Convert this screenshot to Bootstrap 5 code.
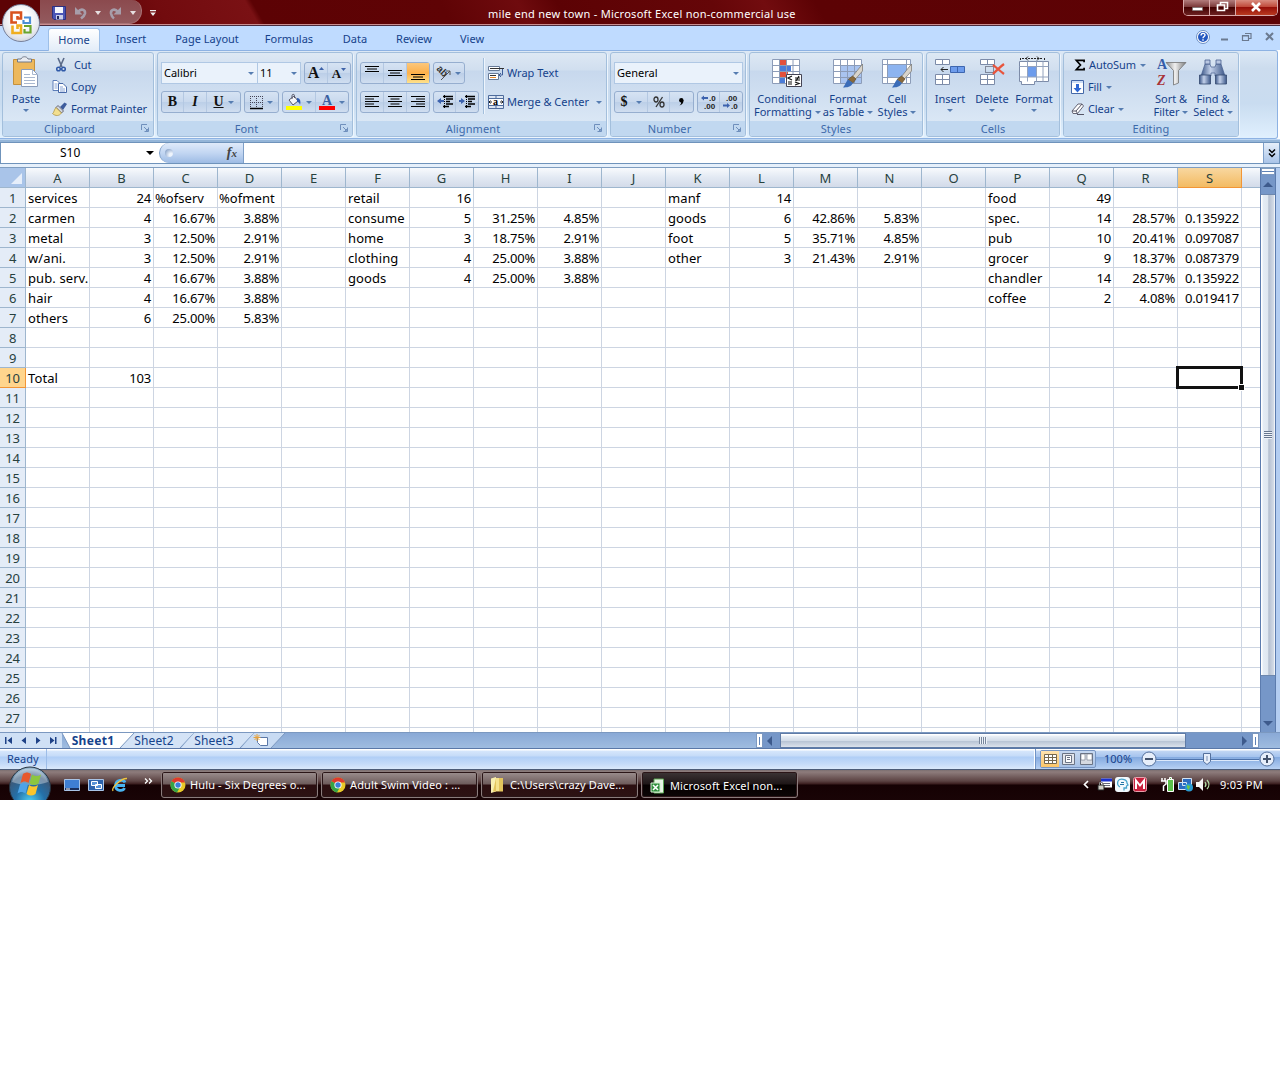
<!DOCTYPE html>
<html lang="en">
<head>
    <meta charset="UTF-8">
    <meta name="viewport" content="width=device-width, initial-scale=1.0">
    <title>mile end new town - Microsoft Excel non-commercial use</title>
    <link href="https://cdn.jsdelivr.net/npm/bootstrap@5.3.0/dist/css/bootstrap.min.css" rel="stylesheet">
    <style>
        body {
            background: #fff;
            font-family: "Noto Sans", "Open Sans", sans-serif;
            font-size: 11px;
            line-height: 14px;
            color: #15428b;
        }

        svg { display: block; flex: none; overflow: visible; }

        .desktop { width: 1280px; height: 800px; overflow: hidden; }

        /* Title bar */
        .titlebar {
            height: 26px;
            background: linear-gradient(60deg, #5d0305 0 8%, #720b0e 13%, #7a1114 20%, #5c0204 20.5%, #5f0305 35%, #6f0b0e 41%, #5c0204 44%, #650608 56%, #720c0f 60%, #5c0204 64%, #5e0305 100%);
            border-bottom: 1px solid #4a2a3c;
            box-shadow: inset 0 -1px #c98d90;
        }
        .quick { width: 102px; height: 24px; margin-left: 40px; padding: 3px 0 0 12px; background: linear-gradient(#8b4a4e, #935a5e); border: 1px solid #a97376; border-width: 0 1px 1px 0; border-radius: 0 10px 13px 0; }
        .quick-more { margin-top: 9px; margin-left: 8px; }
        .caption { color: #fff; width: 320px; top: 7px; left: 488px; letter-spacing: .28px; }
        .winbtns { width: 95px; height: 16px; margin-right: 2px; border: 1px solid #d9a9a9; border-top: 0; border-radius: 0 0 5px 5px; overflow: hidden; }
        .winbtns > div { width: 26px; background: linear-gradient(#b27c7c, #7c3a3a 45%, #400 50%, #6c2222); border-right: 1px solid #d9a9a9; }
        .winbtns > .closer { width: 42px; border: 0; background: linear-gradient(#d98c7f, #c04a3a 45%, #960f08 50%, #b93a20); }

        .orb { width: 38px; height: 38px; left: 2px; top: 4px; border-radius: 50%; background: radial-gradient(circle at 50% 40%, #fff 30%, #e4e6ec 65%, #b3bac8); border: 1px solid #77809a; z-index: 3; }

        /* Ribbon */
        .tabs { height: 24px; background: #bfdbff; padding-left: 48px; }
        .tabs > div { text-align: center; line-height: 25px; }
        .tabs .w-home { width: 52px; height: 23px; margin-top: 2px; line-height: 21px; background: linear-gradient(#fff, #e2ecf8); border: 1px solid #9dbfe8; border-bottom: 0; border-radius: 3px 3px 0 0; }
        .w62 { width: 62px; } .w90 { width: 90px; } .w74 { width: 74px; } .w58 { width: 58px; } .w60 { width: 60px; } .w56 { width: 56px; }

        .ribbon { height: 89px; padding: 1px 0 0 2px; gap: 3px; background: linear-gradient(#dce8f5, #ccdcee 20%, #c9dcf0 60%, #e0f0fe); border: 1px solid #8db2e3; border-left: 0; border-radius: 0 3px 3px 0; margin-right: 2px; }
        .group { height: 85px; border: 1px solid #a3bfdc; border-radius: 3px; background: linear-gradient(#dde8f4 0, #d1dfef 20%, #c7d8ed 22%, #dae7f5 82%); box-shadow: 1px 1px #edf5fd; }
        .group-body { height: 68px; }
        .group-name { height: 15px; background: #c1d8f0; color: #3e6aaa; text-align: center; line-height: 15px; border-radius: 0 0 2px 2px; letter-spacing: .1px; }
        .group-name svg { position: absolute; right: 4px; top: 3px; }
        .group-name.has-launch { padding-right: 17px; }
        .g-clip { width: 152px; } .g-font { width: 196px; } .g-align { width: 251px; } .g-num { width: 136px; } .g-style { width: 174px; } .g-cells { width: 134px; } .g-edit { width: 176px; }

        .bigbtn { width: 42px; padding-top: 3px; text-align: center; line-height: 13px; white-space: nowrap; }
        .bigbtn svg.pic { margin: 0 auto 4px; }
        .bigbtn .arr { margin: 4px auto 0; }
        .bigbtn .arr.d-inline-block { margin: 0; vertical-align: 2px; }
        .w-cond { width: 66px; } .w-tbl { width: 52px; margin: 0 1px 0 2px; } .w-cell { width: 44px; }
        .smalls { padding-top: 1px; letter-spacing: -.1px; }
        .smallbtn { height: 22px; white-space: nowrap; }
        .g-clip .smalls { margin-left: 3px; }
        .gap3 { gap: 3px; }
        .cells-row { padding-left: 2px; }
        .edit-row { padding: 0 4px 0 7px; }
        .arr { display: inline-block; width: 0; height: 0; border: 3px solid transparent; border-top: 3px solid #567db1; border-bottom: 0; vertical-align: middle; flex: none; }

        .tools { padding-top: 9px; padding-left: 3px; gap: 7px; }
        .tools > .d-flex { height: 22px; gap: 3px; }
        .set { border: 1px solid #96aecf; border-radius: 3px; background: linear-gradient(#d6e3f3, #c8d8ed 50%, #bccfe8 52%, #d0def0); }
        .set > div { width: 23px; height: 20px; border-right: 1px solid #b4c8e2; display: flex; align-items: center; justify-content: center; gap: 4px; }
        .set > div:last-child { border-right: 0; }
        .set .on { background: linear-gradient(#fbc77c, #fdb04a 50%, #fee28c); }
        .combo { height: 22px; background: #eaf2fb; border: 1px solid #b0c8e4; color: #000; padding: 0 3px 0 2px; }
        .ser { font-family: "Liberation Serif", serif; font-weight: bold; color: #111; font-size: 14px; }
        .set > .grow-a { font-size: 16px; gap: 0; }
        .set > .shrink-a { font-size: 13px; gap: 0; padding-top: 2px; }
        .pct { font-size: 14px; color: #222; font-weight: 500; }
        .w97 { width: 97px; } .w43 { width: 44px; margin-left: -4px; } .w128 { width: 129px; }
        .set > .w33 { width: 33px; } .set > .w30 { width: 30px; } .set > .w32 { width: 32px; } .set > .w22 { width: 22px; }
        .vline { width: 2px; height: 56px; margin: 5px 0 0 4px; border-left: 1px solid #a3bfdc; border-right: 1px solid #eef5fd; }

        /* Formula bar */
        .fbar-wrap { height: 29px; padding-top: 3px; background: linear-gradient(#bcd6f2 0 1px, #94b5d8 1px 3px, #e6f0fb 3px 28px, #7f9dc0 28px); }
        .fbar { height: 22px; border: 1px solid #6f93bb; background: #fff; color: #000; font-size: 12px; }
        .namebox { width: 158px; padding-left: 59px; padding-right: 5px; }
        .namebox .arr { border-width: 4px 4px 0; border-top-color: #000; }
        .fxpill { width: 85px; border: 1px solid #7f9fc8; border-width: 0 1px 0 1px; border-radius: 11px 0 0 11px; background: linear-gradient(#dfeafa, #c2d6f2 50%, #9dbbe4); padding: 0 6px; font-family: "Liberation Serif", serif; font-style: italic; font-weight: bold; font-size: 14px; color: #444; }
        .fxpill i { width: 8px; height: 8px; border-radius: 50%; background: radial-gradient(circle at 75% 75%, #eef4fc 20%, #8fa8cc 80%); margin-left: -1px; }
        .fxpill span span { font-size: 11px; }
        .expand { width: 16px; background: linear-gradient(#e6effa, #a9c4e8); border-left: 1px solid #7f9fc8; }

        /* Worksheet */
        .sheet-area { height: 564px; background: #b3cdf1; }
        .gridbox { width: 1260px; height: 564px; overflow: hidden; background: #fff; }
        .grid { width: 1306px; table-layout: fixed; border-collapse: separate; border-spacing: 0; font-size: 13px; color: #000; }
        .grid td, .grid th { height: 20px; padding: 1px 2px 0; line-height: 18px; border: solid #cdd5e2; border-width: 0 1px 1px 0; white-space: nowrap; font-weight: 400; position: relative; }
        .grid td { letter-spacing: .1px; }
        .grid td.num { text-align: right; letter-spacing: -.2px; }
        .grid td.pct-label { padding-left: 1px; letter-spacing: .05px; }
        .grid th { text-align: center; color: #27413e; padding: 1px 0 0; border-color: #9eb6ce; }
        .grid thead th { background: linear-gradient(#f8fafd, #e2e9f3 50%, #d3dbe9); }
        .grid tbody th { background: #e4ecf7; letter-spacing: -.2px; }
        .grid thead th.hot { background: linear-gradient(#f8d7a0, #f3bb62); border-color: #f29536; }
        .grid tbody th.hot { background: #ffd58d; border-color: #f29536; }
        .grid thead th.corner { background: #a9c4e9; padding: 0; }
        .corner svg { position: absolute; right: 3px; bottom: 3px; }
        .cursor { position: absolute; left: -2px; top: -2px; width: 67px; height: 23px; border: 3px solid #111; z-index: 2; }
        .cursor::after { content: ""; position: absolute; right: -4px; bottom: -4px; width: 5px; height: 5px; background: #111; outline: 1px solid #fff; }

        .vscroll { width: 16px; background: #7697c8; border-left: 1px solid #5c7cae; border-right: 1px solid #5c7cae; }
        .vsplit { height: 7px; background: linear-gradient(#7f9dc0 0 1px, #fff 1px 3px, #5f82b6 3px 4px, #fff 4px); border: 1px solid #7c98c0; border-top: 0; }
        .vup { height: 19px; }
        .vthumb { height: 482px; border: 1px solid #6d87ad; border-width: 1px 0; background: linear-gradient(90deg, #fff 0 1px, #e4ecf5 2px, #dfe7f0 50%, #b4bfd0 55%, #d3dbe6 90%, #fff); }
        .vthumb i { width: 8px; height: 8px; background: repeating-linear-gradient(#66768e 0 1px, #eef2f8 1px 2px); }
        .up, .down, .lf, .rt { width: 0; height: 0; border: 5px solid transparent; }
        .up { border-top: 0; border-bottom: 5px solid #3d5a8c; }
        .down { border-bottom: 0; border-top: 5px solid #3d5a8c; margin-bottom: 6px; }
        .lf { border-left: 0; border-right: 5px solid #3d5a8c; }
        .rt { border-right: 0; border-left: 5px solid #3d5a8c; }

        /* Sheet tabs */
        .bottom { height: 17px; border-top: 1px solid #7b98c0; border-bottom: 1px solid #5a78a8; background: linear-gradient(#89a9d6, #9fbce0); font-size: 12px; }
        .navs { width: 62px; background: #cfe0f5; padding: 0 5px; }
        .stab { height: 15px; line-height: 15px; text-align: center; position: relative; z-index: 1; letter-spacing: .15px; }
        .stab svg.edge { position: absolute; left: 0; top: 0; z-index: -1; }
        .s-one { width: 62px; font-weight: bold; letter-spacing: .3px; z-index: 3; }
        .s-two { width: 60px; }
        .hgrip { width: 7px; background: #fff; border: 1px solid #7c98c0; }
        .hgrip::after { content: ""; display: block; width: 1px; height: 8px; margin: 3px 0 0 2px; background: #5f82b6; }
        .hgrip.last { margin-right: 21px; }
        .hthumb { width: 406px; border: 1px solid #5f7ba6; background: linear-gradient(#fff 0 1px, #e9eff6 2px, #d3dce8 50%, #b7c3d4 55%, #dbe2ec); }
        .hthumb i { width: 8px; height: 7px; background: repeating-linear-gradient(90deg, #77869c 0 1px, #eef2f8 1px 2px); }
        .htrack { background: #7697c8; width: 17px; padding-left: 4px; }
        .htrack.far { width: 66px; padding-right: 5px; }

        /* Status bar */
        .status { height: 21px; background: linear-gradient(#fff 0 1px, #d6e6fb 2px, #c5dbf8 35%, #b0cef6 40%, #c5dbf8 75%, #dbe9fb); border-bottom: 1px solid #4c5c78; }
        .ready { width: 47px; padding-left: 7px; border-right: 1px solid #9dbde8; }
        .status .zone { width: 245px; background: linear-gradient(#fff 0 1px, #c1d6f3 2px, #a6c4ee 38%, #85abe0 42%, #a9c6ee 85%, #b9d2f3); border-left: 1px solid #6f93c6; box-shadow: -1px 0 #fff; }
        .views { height: 18px; border: 1px solid #7795c2; border-radius: 2px; margin-left: 4px; background: linear-gradient(#c6d8f0, #a8c2e6); }
        .views > div { width: 18px; display: flex; align-items: center; justify-content: center; }
        .views .on { background: linear-gradient(#ffe3b0, #fdc669); }
        .zoombar { margin-right: 5px; }

        /* Taskbar */
        .taskbar { height: 30px; background: linear-gradient(#7c6f70 0, #8d7c7c 2px, #5c4343 11px, #3a1d1e 14px, #150103 15px, #190406 100%); color: #fff; }
        .start { position: absolute; left: 8px; top: -4px; }
        .task { width: 157px; height: 27px; margin-top: 1px; border: 1px solid #8b7c7c; border-radius: 3px; padding-left: 8px; gap: 4px; background: linear-gradient(#9c8f8f, #6e5c5c 48%, #2b0e10 52%, #2c1213); box-shadow: inset 0 0 0 1px #2a1517; white-space: nowrap; margin-right: 3px; letter-spacing: .13px; }
        .task.active { background: linear-gradient(#3d3536, #1e1617 48%, #050000 52%, #0c0606); padding-top: 2px; }
        .tray { gap: 3px; padding-right: 17px; padding-bottom: 2px; }
        .tray .first { margin-right: 6px; }
        .tray .third { margin-right: 11px; }
        .tray .clock { margin-left: 6px; letter-spacing: .25px; padding-top: 2px; }
    </style>
</head>
<body>
<!-- Shared icons -->
<svg width="0" height="0" class="position-absolute">
    <defs>
        <symbol id="launch" viewBox="0 0 8 8"><path d="M.5 6V.5H6" fill="none" stroke="#6f8fbc"/><path d="M3 3l3 3M7.500 3.500V7.500H3.500M5 7h2V5z" fill="none" stroke="#6f8fbc"/></symbol>
        <symbol id="chrome" viewBox="0 0 16 16"><circle cx="8" cy="8" r="7.500" fill="#e8c928"/><path d="M8 8L1.500 4.200A7.500 7.500 0 0 1 15 5.500H8z" fill="#dd3a2c"/><path d="M8 8L1.500 4.200A7.500 7.500 0 0 0 7 15.400L10 10z" fill="#35a346"/><circle cx="8" cy="8" r="3.600" fill="#fff"/><circle cx="8" cy="8" r="2.700" fill="#3c7fd6"/></symbol>
        <symbol id="brush" viewBox="0 0 20 24"><path d="M19.500 0v7l-7 8-3-2.500z" fill="#d8d4cc" stroke="#77736b" stroke-width=".7"/><path d="M9.500 12l3.500 3-3 4-5-3.500z" fill="#8a6a3c" stroke="#54442a" stroke-width=".6"/><path d="M5 15.500l5 3.500c-2 4-6 4.500-10 4.500 2-2 2.500-5 5-8z" fill="#3b6cb8"/></symbol>
        <linearGradient id="steel"><stop offset="0" stop-color="#3c5788"/><stop offset=".4" stop-color="#c3d1ea"/><stop offset="1" stop-color="#3c5788"/></linearGradient>
        <linearGradient id="funnel"><stop offset="0" stop-color="#8d8d8d"/><stop offset=".45" stop-color="#f0f0f0"/><stop offset="1" stop-color="#7c7c7c"/></linearGradient>
    </defs>
</svg>

<div class="desktop position-relative">
    <!-- Title bar -->
    <div class="titlebar d-flex justify-content-between position-relative">
        <div class="d-flex">
            <div class="quick d-flex align-items-center">
                <svg width="14" height="14" viewBox="0 0 14 14"><path d="M.5.5h13v13H2L.5 12z" fill="#4b55b5" stroke="#2d3180"/><path d="M3 1h8v6H3z" fill="#f4f6fc"/><path d="M4 9h7v4.500H4z" fill="#c9cee8"/><path d="M5 10h2v3H5z" fill="#23275e"/></svg>
                <svg class="ms-2" width="13" height="13" viewBox="0 0 13 13"><path d="M4 5C7 1 11.500 2.500 11 6.500c-.4 2-2 3.500-4 5" fill="none" stroke="#a79daa" stroke-width="2.600"/><path d="M1 0v7.500h7.500z" fill="#a79daa"/></svg>
                <svg class="ms-2" width="6" height="4" viewBox="0 0 6 4"><path d="M0 0h6L3 4z" fill="#e6dfe0"/></svg>
                <svg class="ms-2" width="13" height="13" viewBox="0 0 13 13"><path d="M9 5C6 1 1.500 2.500 2 6.500c.4 2 1 3.500 3 5" fill="none" stroke="#a79daa" stroke-width="2.600"/><path d="M12 0v7.500H4.500z" fill="#a79daa"/></svg>
                <svg class="ms-2" width="6" height="4" viewBox="0 0 6 4"><path d="M0 0h6L3 4z" fill="#e6dfe0"/></svg>
            </div>
            <svg class="quick-more" width="6" height="8" viewBox="0 0 6 8"><path d="M0 1h6v1.200H0zM.2 3.500h5.600L3 7z" fill="#eee"/></svg>
        </div>
        <div class="caption position-absolute text-nowrap">mile end new town - Microsoft Excel non-commercial use</div>
        <div class="winbtns d-flex">
            <div><svg width="26" height="15"><path d="M8.500 7.500h10v3h-10z" fill="#fff" stroke="#777" stroke-width=".6"/></svg></div>
            <div><svg width="26" height="15"><path d="M10.500 5V2.500h7v6H15M7.500 5h7v5.500h-7z" fill="none" stroke="#fff" stroke-width="1.600"/></svg></div>
            <div class="closer"><svg width="42" height="15"><path d="M16 3l8 8M24 3l-8 8" stroke="#fff" stroke-width="2.600"/></svg></div>
        </div>
    </div>

    <div class="orb position-absolute">
        <svg width="36" height="36" viewBox="0 0 36 36" fill="none" stroke-width="2.600">
            <path d="M14 17.500H8.500V7.500H18V13.500H14.500V11" stroke="#d9531e"/>
            <path d="M21 12.500H27V18H20.500V15" stroke="#4c8ed6" stroke-width="2.200"/>
            <path d="M14.500 24V20.500H18V28H9.500V20.500" stroke="#f0ae1f"/>
            <path d="M21 21H27.500V27.500H21.500V24" stroke="#6aa52e" stroke-width="2.200"/>
        </svg>
    </div>

    <!-- Ribbon tabs -->
    <div class="tabs d-flex justify-content-between">
        <div class="d-flex">
            <div class="w-home">Home</div>
            <div class="w62">Insert</div>
            <div class="w90">Page Layout</div>
            <div class="w74">Formulas</div>
            <div class="w58">Data</div>
            <div class="w60">Review</div>
            <div class="w56">View</div>
        </div>
        <svg width="84" height="24" viewBox="0 0 84 24">
            <circle cx="7" cy="11" r="6.500" fill="#fff" stroke="#6c8fc4"/><circle cx="7" cy="11" r="5" fill="#2458c0"/><path d="M5 9.500c0-2.800 4-2.800 4-.4C9 10.600 7 10.500 7 12.300M7 13.300v1.400" fill="none" stroke="#fff" stroke-width="1.400"/>
            <g fill="none" stroke="#6b7a90"><path d="M25 13.500h7" stroke-width="2"/><path d="M46.500 9.500h6v5h-6zM46 10h7M49 7.500h6v5h-2M49 7.500h6" stroke-width="1.200"/><path d="M70 7l7 7M77 7l-7 7" stroke-width="2"/></g>
        </svg>
    </div>

    <!-- Ribbon -->
    <div class="ribbon d-flex">
        <div class="group g-clip">
            <div class="group-body d-flex">
                <div class="bigbtn gap3 ps-1">
                    <svg class="pic" width="28" height="32" viewBox="0 0 28 32"><path d="M1.500 3.500h21v25h-21z" fill="#edb85c" stroke="#c4903c"/><path d="M5.500 6V3h3.500c1-3 6-3 7 0h3.500v3z" fill="#e8ebf0" stroke="#707888"/><path d="M9.500 13.500h11l5 5v12h-16z" fill="#fff" stroke="#8a9cba"/><path d="M20.500 13.500v5h5M12 18.500h6M12 21.500h11M12 24.500h11M12 27.500h11" stroke="#a9b8d0" fill="none"/></svg>
                    Paste<br><span class="arr d-block"></span>
                </div>
                <div class="smalls">
                    <div class="smallbtn d-flex align-items-center ps-2">
                        <svg width="10" height="14" viewBox="0 0 10 14"><path d="M2 0l4 9M8 0L4 9" stroke="#5a6a88" stroke-width="1.600"/><circle cx="2.500" cy="11" r="1.800" fill="none" stroke="#2f59a8" stroke-width="1.500"/><circle cx="7.500" cy="11" r="1.800" fill="none" stroke="#2f59a8" stroke-width="1.500"/></svg>
                        <span class="ms-1 ps-1">Cut</span>
                    </div>
                    <div class="smallbtn d-flex align-items-center gap-1 ps-1">
                        <svg width="15" height="14" viewBox="0 0 15 14"><path d="M1 .5h4l3 3v7H1z" fill="#fff" stroke="#5c7db8"/><path d="M6.500 3.500h4.500l3.500 3.500v5.500h-8z" fill="#fff" stroke="#4668a8"/><path d="M2.500 4h3M2.500 6h3M2.500 8h3M8 7h3M8 9h5M8 11h5" stroke="#7c9ad0" stroke-width=".9"/></svg>Copy
                    </div>
                    <div class="smallbtn d-flex align-items-center gap-1 ps-1">
                        <svg width="15" height="14" viewBox="0 0 15 14"><path d="M8 5l4.500-4.500L15 2l-4 6z" fill="#3d5c9c"/><path d="M6 3.500l5.500 5.500-2 2L4 5.500z" fill="#d0d6e0" stroke="#667"/><path d="M4 5.500L9.500 11c-2 3-6 3.500-9 .5C2 11 2 7.500 4 5.500z" fill="#f2df90" stroke="#a98c38" stroke-width=".7"/></svg>Format Painter
                    </div>
                </div>
            </div>
            <div class="group-name has-launch position-relative">Clipboard<svg width="8" height="8"><use href="#launch"/></svg></div>
        </div>

        <div class="group g-font">
            <div class="group-body tools d-flex flex-column">
                <div class="d-flex">
                    <div class="combo w97 d-flex align-items-center justify-content-between">Calibri <span class="arr"></span></div>
                    <div class="combo w43 d-flex align-items-center justify-content-between">11 <span class="arr"></span></div>
                    <div class="set d-flex">
                        <div class="ser grow-a">A<svg width="5" height="14"><path d="M0 4h5L2.500 1z" fill="#3d62a8"/></svg></div>
                        <div class="ser shrink-a w22">A<svg width="5" height="14"><path d="M0 1h5L2.500 4z" fill="#3d62a8"/></svg></div>
                    </div>
                </div>
                <div class="d-flex">
                    <div class="set d-flex">
                        <div class="ser w22">B</div>
                        <div class="ser fst-italic">I</div>
                        <div class="ser w33"><u>U</u><span class="arr"></span></div>
                    </div>
                    <div class="set d-flex">
                        <div class="w33"><svg width="13" height="13" viewBox="0 0 13 13"><path d="M.5 0v12M6.500 0v12M12.500 0v12M0 .5h13M0 6.500h13" stroke="#445" stroke-dasharray="1 1" fill="none"/><path d="M0 12.500h13" stroke="#000" stroke-width="1.500"/></svg><span class="arr"></span></div>
                    </div>
                    <div class="set d-flex">
                        <div class="w33"><svg width="16" height="16" viewBox="0 0 16 16"><path d="M3 6l5-4 4 5-5 4z" fill="#f4f6fa" stroke="#556"/><path d="M6 5V1.500c0-1.500 2.500-1.500 2.500 0V4" fill="none" stroke="#556"/><path d="M11 4c3 0 4 3 3 7-.5-2-1-3-3-3z" fill="#2b59b0"/><path d="M0 12h16v4H0z" fill="#ff0"/></svg><span class="arr"></span></div>
                        <div class="w32"><svg width="16" height="16" viewBox="0 0 16 16"><text x="3" y="11" font-family="Liberation Serif, serif" font-weight="bold" font-size="14" fill="#3a5fa0">A</text><path d="M0 12h16v4H0z" fill="#f00"/></svg><span class="arr"></span></div>
                    </div>
                </div>
            </div>
            <div class="group-name has-launch position-relative">Font<svg width="8" height="8"><use href="#launch"/></svg></div>
        </div>

        <div class="group g-align">
            <div class="group-body d-flex">
                <div class="tools d-flex flex-column">
                    <div class="d-flex">
                        <div class="set d-flex">
                            <div><svg width="14" height="14"><path d="M0 .5h14M2 3h10M0 5.500h14" stroke="#000"/></svg></div>
                            <div><svg width="14" height="14"><path d="M0 4.500h14M2 7h10M0 9.500h14" stroke="#000"/></svg></div>
                            <div class="on w22"><svg width="14" height="14"><path d="M0 8.500h14M2 11h10M0 13.500h14" stroke="#000"/></svg></div>
                        </div>
                        <div class="set d-flex"><div class="w30"><svg width="14" height="14" viewBox="0 0 14 14"><text x="-1" y="5" transform="rotate(45 1 4)" font-size="10" font-weight="bold" font-family="Liberation Sans, sans-serif" fill="#333">ab</text><path d="M4 14l9-9M13 9V5H9" fill="none" stroke="#555"/></svg><span class="arr"></span></div></div>
                    </div>
                    <div class="d-flex">
                        <div class="set d-flex">
                            <div><svg width="14" height="12"><path d="M0 .5h14M0 3h9M0 5.500h14M0 8h9M0 10.500h14" stroke="#000" stroke-width="1.200"/></svg></div>
                            <div><svg width="14" height="12"><path d="M0 .5h14M2.500 3h9M0 5.500h14M2.500 8h9M0 10.500h14" stroke="#000" stroke-width="1.200"/></svg></div>
                            <div class="w22"><svg width="14" height="12"><path d="M0 .5h14M5 3h9M0 5.500h14M5 8h9M0 10.500h14" stroke="#000" stroke-width="1.200"/></svg></div>
                        </div>
                        <div class="set d-flex">
                            <div class="w22"><svg width="16" height="14"><path d="M6 1.500h10M9 4h7M9 6.500h4M9 9h7M6 11.500h6" stroke="#000" stroke-width="1.400"/><path d="M7.500 0v14" stroke="#000" stroke-dasharray="1 1"/><path d="M0 6l4-3v2h3v2H4v2z" fill="#3c62ae"/></svg></div>
                            <div class="w22"><svg width="16" height="14"><path d="M6 1.500h10M9 4h7M9 6.500h4M9 9h7M6 11.500h6" stroke="#000" stroke-width="1.400"/><path d="M7.500 0v14" stroke="#000" stroke-dasharray="1 1"/><path d="M6 6L2 3v2H0v2h2v2z" fill="#3c62ae"/></svg></div>
                        </div>
                    </div>
                </div>
                <div class="vline"></div>
                <div class="tools d-flex flex-column text-nowrap">
                    <div class="d-flex align-items-center">
                        <svg width="16" height="16" viewBox="0 0 16 16"><path d="M.5 1.500h11v4H.5zM.5 8.500h10v6H.5z" fill="#fff" stroke="#667a98"/><path d="M2 3.500h14M2 10.500h6" stroke="#333"/><path d="M2 12.500h6" stroke="#e88a2c"/><path d="M14.500 4v6h-3M13 8l-2 2 2 2" fill="none" stroke="#3c5c98"/></svg>Wrap Text
                    </div>
                    <div class="d-flex align-items-center">
                        <svg width="16" height="16" viewBox="0 0 16 16"><path d="M.5 1.500h15v13H.5zM.5 4.500h15M.5 11.500h15M8 1.500v3M8 11.500v3" fill="#dce6f4" stroke="#4f6c9c"/><path d="M1 5h14v6H1z" fill="#fff"/><text x="5" y="11" font-size="10" font-weight="bold" font-family="Liberation Serif, serif">a</text><path d="M1 8h3M12 8h3M2.500 6.500L1 8l1.500 1.500M13.500 6.500L15 8l-1.500 1.500" stroke="#222" fill="none"/></svg>Merge &amp; Center <span class="arr ms-1"></span>
                    </div>
                </div>
            </div>
            <div class="group-name has-launch position-relative">Alignment<svg width="8" height="8"><use href="#launch"/></svg></div>
        </div>

        <div class="group g-num">
            <div class="group-body tools d-flex flex-column">
                <div class="d-flex"><div class="combo w128 d-flex align-items-center justify-content-between">General <span class="arr"></span></div></div>
                <div class="d-flex">
                    <div class="set d-flex">
                        <div class="ser w33"><span class="me-1">$</span><span class="arr"></span></div>
                        <div class="w22"><svg width="12" height="12" viewBox="0 0 12 12" fill="none" stroke="#333" stroke-width="1.300"><path d="M9.500 1l-6.500 10"/><ellipse cx="3" cy="3.500" rx="2" ry="2.500"/><ellipse cx="9" cy="8.500" rx="2" ry="2.500"/></svg></div>
                        <div class="ser"><svg width="5" height="8"><circle cx="2.300" cy="2.300" r="2.200"/><path d="M4.500 2.500C4.500 5 3 7 .5 7.500 2 6 2.500 5 2 4z"/></svg></div>
                    </div>
                    <div class="set d-flex">
                        <div class="w22"><svg width="16" height="14" font-size="8" font-weight="bold" font-family="Liberation Sans, sans-serif" fill="#222"><text x="8" y="6">.0</text><text x="3" y="14">.00</text><path d="M0 3l3-2.500V2h4v2H3v1.500z" fill="#3c62ae"/></svg></div>
                        <div class="w22"><svg width="16" height="14" font-size="8" font-weight="bold" font-family="Liberation Sans, sans-serif" fill="#222"><text x="3" y="6">.00</text><text x="8" y="14">.0</text><path d="M7 10.500L4 8v1.500H0v2h4V13z" fill="#3c62ae"/></svg></div>
                    </div>
                </div>
            </div>
            <div class="group-name has-launch position-relative">Number<svg width="8" height="8"><use href="#launch"/></svg></div>
        </div>

        <div class="group g-style">
            <div class="group-body d-flex ps-1">
                <div class="bigbtn w-cond">
                    <svg class="pic" width="32" height="32" viewBox="0 0 32 32"><path d="M1.500 3.500h27v24h-27z" fill="#fff"/><path d="M8 3h7v6H8zM8 15h9v6H8z" fill="#e2503c"/><path d="M8 9h12v6H8zM8 21h6v6H8z" fill="#4a7cd8"/><path d="M1.500 3.500h27v24h-27zM1.500 9.500h27M1.500 15.500h27M1.500 21.500h27M8.500 3.500v24M15.500 3.500v24M22 3.500v24" fill="none" stroke="#8c9cb8"/><path d="M15.500 18.500h15v12h-15z" fill="#fff" stroke="#445"/><path d="M21 20l-4 2 4 2M17 26h4M17 28h4M24 22h5M24 24h5M28 20l-3 5M24 26l4 1.500-4 1.500" fill="none" stroke="#111" stroke-width="1.200"/></svg>
                    Conditional<br>Formatting <span class="arr d-inline-block"></span>
                </div>
                <div class="bigbtn w-tbl">
                    <svg class="pic" width="32" height="32" viewBox="0 0 32 32"><path d="M1.500 3.500h28v24h-28z" fill="#fff"/><path d="M8 9h21v18H8z" fill="#a9c4f0"/><path d="M1.500 3.500h28v24h-28zM1.500 9.500h28M1.500 15.500h28M1.500 21.500h28M8.500 3.500v24M15.500 3.500v24M22.500 3.500v24" fill="none" stroke="#8c9cb8"/><use href="#brush" x="11" y="8" width="20" height="24"/></svg>
                    Format<br>as Table <span class="arr d-inline-block"></span>
                </div>
                <div class="bigbtn w-cell">
                    <svg class="pic" width="32" height="32" viewBox="0 0 32 32"><path d="M1.500 3.500h28v24h-28z" fill="#fff"/><path d="M7 8h18v13H7z" fill="#8db4f0"/><path d="M1.500 3.500h28v24h-28zM1.500 8.500h28M1.500 21.500h28M6.500 3.500v24M25.500 3.500v24" fill="none" stroke="#8c9cb8"/><use href="#brush" x="11" y="8" width="20" height="24"/></svg>
                    Cell<br>Styles <span class="arr d-inline-block"></span>
                </div>
            </div>
            <div class="group-name">Styles</div>
        </div>

        <div class="group g-cells">
            <div class="group-body cells-row d-flex">
                <div class="bigbtn">
                    <svg class="pic" width="32" height="32" viewBox="0 0 32 32"><path d="M1.500 3.500h14v5h-14zM8.500 3.500v5M1.500 18.500h14v10h-14zM8.500 18.500v10M1.500 23.500h14" fill="#fff" stroke="#7c8ba8"/><path d="M16.500 10.500h14v6h-14zM23.500 10.500v6" fill="#6d9cec" stroke="#3d66b0"/><path d="M7 13.500h7M9.500 11L7 13.500 9.500 16" fill="none" stroke="#222"/></svg>
                    Insert<span class="arr d-block"></span>
                </div>
                <div class="bigbtn">
                    <svg class="pic" width="32" height="32" viewBox="0 0 32 32"><path d="M4.500 3.500h14v5h-14zM11.500 3.500v5M4.500 18.500h14v10h-14zM11.500 18.500v10M4.500 23.500h14" fill="#fff" stroke="#7c8ba8"/><path d="M9.500 10.500h8v6h-8z" fill="none" stroke="#334" stroke-dasharray="1 1"/><path d="M17 9c4 3 7 6 11 9M28 8c-4 3-7 6-11 10" fill="none" stroke="#e8543c" stroke-width="2.200"/></svg>
                    Delete<span class="arr d-block"></span>
                </div>
                <div class="bigbtn">
                    <svg class="pic" width="32" height="32" viewBox="0 0 32 32"><path d="M1.500 5.500h29v20h-14v3h-13v-3h-2z" fill="#fff" stroke="#7c8ba8"/><path d="M10 11h8v10h-8z" fill="#6d9cec"/><path d="M1.500 10.500h29M1.500 21h29M9.500 5.500v20M18.500 5.500v20M25 5.500v20" stroke="#94a3be" fill="none"/><path d="M2.500 4V1M26.500 4V1M4 2.500h21" stroke="#222" stroke-dasharray="2 1"/><path d="M10 .5L8 2.500l2 2M19 .5l2 2-2 2" fill="none" stroke="#222"/></svg>
                    Format<span class="arr d-block"></span>
                </div>
            </div>
            <div class="group-name">Cells</div>
        </div>

        <div class="group g-edit">
            <div class="group-body edit-row d-flex justify-content-between">
                <div class="smalls">
                    <div class="smallbtn d-flex align-items-center"><svg class="ms-1 me-1" width="10" height="12" viewBox="0 0 11 12"><path d="M10 3V1H1.500L6 6l-4.500 5H10V9" fill="none" stroke="#000" stroke-width="1.900"/></svg>AutoSum <span class="arr ms-1"></span></div>
                    <div class="smallbtn d-flex align-items-center"><svg class="me-1" width="13" height="14" viewBox="0 0 13 14"><path d="M.5.5h12v13H.5z" fill="#fff" stroke="#4468a8"/><path d="M1 1h11v2H1z" fill="#cdddf5"/><path d="M5 4h3v4h2.500l-4 4.500L2.500 8H5z" fill="#2f68d4"/></svg>Fill <span class="arr ms-1"></span></div>
                    <div class="smallbtn d-flex align-items-center"><svg class="me-1" width="13" height="12" viewBox="0 0 13 12"><path d="M1 8l6-7h4l1.500 2-6 7.500H2z" fill="#fff" stroke="#667"/><path d="M1 8h4l1.500 2.500M5 8l6-7M6 11.500h7" fill="none" stroke="#556"/></svg>Clear <span class="arr ms-1"></span></div>
                </div>
                <div class="d-flex">
                    <div class="bigbtn">
                        <svg class="pic" width="32" height="32" viewBox="0 0 32 32" font-family="Liberation Serif, serif" font-weight="bold" font-size="14"><path d="M11 6.500h20l-7.500 8V27l-5 2V14.500z" fill="url(#funnel)" stroke="#747474" stroke-width=".8"/><text x="2" y="13" fill="#345ca8">A</text><text x="2" y="29" fill="#a83238" font-style="italic">Z</text></svg>
                        Sort &amp;<br>Filter <span class="arr d-inline-block"></span>
                    </div>
                    <div class="bigbtn">
                        <svg class="pic" width="32" height="32" viewBox="0 0 32 32"><path d="M8 8l5 0 1 3h4l1-3h5l4 12H18v-3h-4v3H4z" fill="url(#steel)" stroke="#4a6191" stroke-width=".7"/><path d="M8 4h5v4H8zM19 4h5v4h-5z" fill="#b9c7e2" stroke="#4a6191" stroke-width=".8"/><path d="M2.500 19h11v9h-11z" fill="url(#steel)" stroke="#33496f" stroke-width=".8"/><path d="M18.500 19h11v9h-11z" fill="url(#steel)" stroke="#33496f" stroke-width=".8"/></svg>
                        Find &amp;<br>Select <span class="arr d-inline-block"></span>
                    </div>
                </div>
            </div>
            <div class="group-name">Editing</div>
        </div>
    </div>

    <!-- Formula bar -->
    <div class="fbar-wrap">
        <div class="fbar d-flex justify-content-between">
            <div class="d-flex">
                <div class="namebox d-flex align-items-center justify-content-between">S10 <span class="arr"></span></div>
                <div class="fxpill d-flex align-items-center justify-content-between"><i></i><span>f<span>x</span></span></div>
            </div>
            <div class="expand d-flex align-items-center justify-content-center"><svg width="8" height="9"><path d="M1 .5l3 3 3-3M1 4.500l3 3 3-3" fill="none" stroke="#000" stroke-width="1.500"/></svg></div>
        </div>
    </div>

    <!-- Worksheet -->
    <div class="sheet-area d-flex">
        <div class="gridbox">
            <table class="grid">
                <colgroup id="cols"></colgroup>
                <thead><tr id="head"></tr></thead>
                <tbody id="rows"></tbody>
            </table>
        </div>
        <div class="vscroll d-flex flex-column align-items-stretch">
            <div class="vsplit"></div>
            <div class="vup d-flex align-items-center justify-content-center"><div class="up"></div></div>
            <div class="vthumb d-flex align-items-center justify-content-center"><i></i></div>
            <div class="d-flex justify-content-center mt-auto"><div class="down"></div></div>
        </div>
    </div>

    <!-- Sheet tabs and horizontal scroll -->
    <div class="bottom d-flex justify-content-between">
        <div class="d-flex">
            <div class="navs d-flex align-items-center">
                <svg width="52" height="8" fill="#1f4287"><path d="M0 0h1.500v7H0zM7 0v7L2.500 3.500zM21 0v7l-4.500-3.500zM31 0v7l4.500-3.500zM45 0v7l4.500-3.500zM50 0h1.500v7H50z"/></svg>
            </div>
            <div class="stab s-one"><svg class="edge" width="76" height="15"><path d="M0 0h72L58 15H8z" fill="#fff"/><path d="M0 0l8 15M72 0L58 15" stroke="#7b98c0" fill="none"/></svg>Sheet1</div>
            <div class="stab s-two"><svg class="edge" width="74" height="15"><path d="M0 0h70L56 15H-3z" fill="#d4e3f6"/><path d="M70 0L56 15" stroke="#7b98c0"/></svg>Sheet2</div>
            <div class="stab s-two"><svg class="edge" width="74" height="15"><path d="M10 0h60L56 15H-3z" fill="#d4e3f6"/><path d="M70 0L56 15" stroke="#7b98c0"/></svg>Sheet3</div>
            <div class="stab s-two"><svg class="edge" width="54" height="15"><path d="M10 0h31L27 15H-3z" fill="#c8dbf3"/><path d="M41 0L27 15" stroke="#7b98c0"/><path d="M13.500 4.500h10v8h-7l-3-3z" fill="#fff" stroke="#5b78a8"/><path d="M13 1v7M9.500 4.500h7M10.500 2l5 5M15.500 2l-5 5" stroke="#e8a33c"/></svg></div>
        </div>
        <div class="d-flex">
            <div class="hgrip"></div>
            <div class="htrack d-flex align-items-center"><div class="lf"></div></div>
            <div class="hthumb d-flex align-items-center justify-content-center"><i></i></div>
            <div class="htrack far d-flex align-items-center justify-content-end"><div class="rt"></div></div>
            <div class="hgrip last"></div>
        </div>
    </div>

    <!-- Status bar -->
    <div class="status d-flex justify-content-between align-items-stretch">
        <div class="ready d-flex align-items-center">Ready</div>
        <div class="zone d-flex align-items-center">
            <div class="views d-flex">
                <div class="on"><svg width="13" height="11"><path d="M.5.5h12v9H.5zM.5 3.500h12M.5 6.500h12M4.500.5v9M8.500.5v9" fill="#fff" stroke="#76684e"/></svg></div>
                <div><svg width="13" height="12"><path d="M.5.5h12v11H.5z" fill="#e3e6ec" stroke="#6b7485"/><path d="M3.500 2.500h6v7h-6zM5 4.500h3M5 6.500h3" fill="#fff" stroke="#6b7485"/></svg></div>
                <div><svg width="13" height="12"><path d="M.5.5h12v11H.5z" fill="#d5d9e0" stroke="#6b7485"/><path d="M1 1h4v6H1zM7 1h5v6H7z" fill="#fff" stroke="#6b7485" stroke-width=".6"/></svg></div>
            </div>
            <span class="ms-2">100%</span>
            <svg class="zoombar ms-auto" width="136" height="20" viewBox="0 0 136 20"><path d="M16 10.500h104" stroke="#4e73ab"/><path d="M16 11.500h104" stroke="#dce9fb"/><g fill="#e6eefa" stroke="#54709c"><circle cx="10" cy="10" r="7"/><circle cx="128" cy="10" r="7"/><path d="M64.500 4.500h7v8l-3.500 3-3.500-3z"/></g><path d="M6 10h8M124 10h8M128 6v8" stroke="#44536c" stroke-width="2"/><path d="M68 7v5" stroke="#7b90b4"/></svg>
        </div>
    </div>

    <!-- Taskbar -->
    <div class="taskbar d-flex position-relative">
        <svg class="start" width="44" height="44" viewBox="0 0 44 44">
            <defs><radialGradient id="sg" cx=".5" cy=".85" r=".8"><stop offset="0" stop-color="#4fd0f4"/><stop offset=".45" stop-color="#2470a8"/><stop offset=".8" stop-color="#3a5a7c"/><stop offset="1" stop-color="#8fb0c8"/></radialGradient></defs>
            <circle cx="22" cy="21.500" r="20.500" fill="url(#sg)" stroke="#26333f"/><path d="M4 16C9-2 35-2 40 16c-10 4-26 4-36 0z" fill="#fff" opacity=".35"/>
            <path d="M15 8c3-2 5-2 8 0l-2.500 9c-3-2-5-2-8 0z" fill="#e8582a"/><path d="M24 8.500c3 2 6 2 9 0l-2.500 9c-3 2-6 2-9 0z" fill="#8cc63e"/><path d="M12 18.500c3-2 5-2 8 0l-2.500 9c-3-2-5-2-8 0z" fill="#4da3e8"/><path d="M21 19c3 2 6 2 9 0l-2.500 9c-3 2-6 2-9 0z" fill="#fbc52c"/>
        </svg>
        <div class="d-flex align-items-center ms-5 ps-3 gap-2">
            <svg width="16" height="14" viewBox="0 0 16 14"><path d="M.5 1.500h15v11H.5z" fill="#3f7fd4" stroke="#a9c4e6"/><path d="M1 10h14v2H1z" fill="#1a2f5c"/><path d="M2 11h4" stroke="#fff"/></svg>
            <svg width="16" height="14" viewBox="0 0 16 14"><path d="M.5 1.500h15v11H.5z" fill="#2c62ac" stroke="#a9c4e6"/><path d="M3.500 3.500h6v4h-6zM7.500 6.500h6v4h-6z" fill="#5a93d8" stroke="#fff"/></svg>
            <svg width="16" height="16" viewBox="0 0 16 16"><path d="M13 5.500C11.500 2 4 2.500 3.500 8.500c0 6 7.500 6 9 2.500M4 8.500h9" fill="none" stroke="#48b4f0" stroke-width="2.800"/><path d="M1 14c-2-3 8-13 14-12.500" fill="none" stroke="#f2c53c" stroke-width="1.300"/></svg>
            <svg class="ms-2 mb-2" width="9" height="6"><path d="M1 .5l2.500 2.500L1 5.500M5 .5l2.500 2.500L5 5.500" fill="none" stroke="#fff" stroke-width="1.300"/></svg>
        </div>
        <div class="d-flex ms-1 ps-1">
            <div class="task d-flex align-items-center"><svg width="16" height="16"><use href="#chrome"/></svg>Hulu - Six Degrees o...</div>
            <div class="task d-flex align-items-center"><svg width="16" height="16"><use href="#chrome"/></svg>Adult Swim Video : ...</div>
            <div class="task d-flex align-items-center"><svg width="16" height="16" viewBox="0 0 16 16"><path d="M1 1.500L6 0v14.500L1 16z" fill="#f9efb0"/><path d="M6 1h7v13.500H3z" fill="#e3c45c"/><path d="M6 1h3v13H6z" fill="#f6e28c"/></svg>C:\Users\crazy Dave...</div>
            <div class="task active d-flex align-items-center"><svg width="16" height="16" viewBox="0 0 16 16"><path d="M4 1h9.500v14H4z" fill="#e8f5e4" stroke="#5aa552"/><path d="M1 5h9v9H1z" fill="#2f8f3c" stroke="#d5ecd2"/><path d="M3 7l5 5M8 7l-5 5" stroke="#fff" stroke-width="1.600"/></svg>Microsoft Excel non...</div>
        </div>
        <div class="tray d-flex align-items-center ms-auto">
            <svg class="first" width="6" height="9" viewBox="0 0 6 9"><path d="M5 1L1.500 4.500 5 8" fill="none" stroke="#fff" stroke-width="1.700"/></svg>
            <svg width="14" height="14" viewBox="0 0 14 14"><path d="M3 1.500h11v9H3z" fill="#fff"/><path d="M3 1.500h11v3H3z" fill="#1a2fd0"/><path d="M5 6.500h7M6 8.500h6" stroke="#445" stroke-width=".8"/><path d="M0 8h6v5H0z" fill="#d0d0c8" stroke="#222"/><path d="M1.500 8V5.500h3V8" fill="none" stroke="#888"/></svg>
            <svg width="15" height="15" viewBox="0 0 15 15"><rect width="15" height="15" rx="3" fill="#f2f9fd"/><path d="M3 4c2-3 9-2 9 2l1 2-1.500 1v2H9v2.500M3 4c-1 3 0 5 2 6" fill="none" stroke="#48a4cc" stroke-width="1.300"/><path d="M6 5.500h3M5 7.500h4" stroke="#2274a4"/></svg>
            <svg class="third" width="14" height="15" viewBox="0 0 14 15"><rect x=".5" y=".5" width="13" height="14" rx="2" fill="#c8203c" stroke="#e8a0ac"/><path d="M3 12V3.500l4 5 4-5V12" fill="none" stroke="#fff" stroke-width="2"/></svg>
            <svg width="14" height="15" viewBox="0 0 14 15"><path d="M6.500 2.500h6v12h-6zM8.500.5h2v2h-2z" fill="#5cc04c" stroke="#fff"/><path d="M1 1v3M4 1v3M0 4h5v3l-2.500 2v5" fill="none" stroke="#fff" stroke-width="1.500"/></svg>
            <svg width="15" height="15" viewBox="0 0 15 15"><path d="M4.500 1.500h9v7h-9zM.5 5.500h8v7h-8z" fill="#2c6cc0" stroke="#d4e4f4"/><circle cx="11" cy="10.500" r="4" fill="#2a9ad0"/><path d="M9 8l3 1-1 4-2-2zM13 8l1 3" fill="#6cc848"/></svg>
            <svg width="15" height="15" viewBox="0 0 15 15"><path d="M0 5h3l4-4v13L3 10H0z" fill="#f4f4f4"/><path d="M9 5q2 2.500 0 5M11 3q4 4.500 0 9" fill="none" stroke="#b4e0a8" stroke-width="1.200"/></svg>
            <span class="clock">9:03 PM</span>
        </div>
    </div>
</div>

<script src="https://cdn.jsdelivr.net/npm/bootstrap@5.3.0/dist/js/bootstrap.bundle.min.js"></script>
<script>
    const letters = 'ABCDEFGHIJKLMNOPQRST'.split('');
    const selected = { col: 'S', row: 10 };

    // Cell contents by row, keyed by column letter
    const cells = {
        1: { A: 'services', B: '24', C: '%ofserv', D: '%ofment', F: 'retail', G: '16', K: 'manf', L: '14', P: 'food', Q: '49' },
        2: { A: 'carmen', B: '4', C: '16.67%', D: '3.88%', F: 'consume', G: '5', H: '31.25%', I: '4.85%', K: 'goods', L: '6', M: '42.86%', N: '5.83%', P: 'spec.', Q: '14', R: '28.57%', S: '0.135922' },
        3: { A: 'metal', B: '3', C: '12.50%', D: '2.91%', F: 'home', G: '3', H: '18.75%', I: '2.91%', K: 'foot', L: '5', M: '35.71%', N: '4.85%', P: 'pub', Q: '10', R: '20.41%', S: '0.097087' },
        4: { A: 'w/ani.', B: '3', C: '12.50%', D: '2.91%', F: 'clothing', G: '4', H: '25.00%', I: '3.88%', K: 'other', L: '3', M: '21.43%', N: '2.91%', P: 'grocer', Q: '9', R: '18.37%', S: '0.087379' },
        5: { A: 'pub. serv.', B: '4', C: '16.67%', D: '3.88%', F: 'goods', G: '4', H: '25.00%', I: '3.88%', P: 'chandler', Q: '14', R: '28.57%', S: '0.135922' },
        6: { A: 'hair', B: '4', C: '16.67%', D: '3.88%', P: 'coffee', Q: '2', R: '4.08%', S: '0.019417' },
        7: { A: 'others', B: '6', C: '25.00%', D: '5.83%' },
        10: { A: 'Total', B: '103' }
    };

    function cellClass(value) {
        if (/^\d/.test(value)) return 'num';
        return value[0] === '%' ? 'pct-label' : '';
    }

    document.getElementById('cols').innerHTML = '<col width="26">' + '<col width="64">'.repeat(letters.length);
    document.getElementById('head').innerHTML =
        '<th class="corner"><svg width="11" height="11"><path d="M11 0v11H0z" fill="#e6eefa"/></svg></th>' +
        letters.map(l => `<th class="${l === selected.col ? 'hot' : ''}">${l === 'T' ? '' : l}</th>`).join('');

    let html = '';
    for (let r = 1; r <= 28; r++) {
        html += `<tr><th class="${r === selected.row ? 'hot' : ''}">${r < 28 ? r : ''}</th>`;
        letters.forEach(l => {
            const value = (cells[r] || {})[l] || '';
            const cursor = l === selected.col && r === selected.row ? '<div class="cursor"></div>' : '';
            html += `<td class="${cellClass(value)}">${value}${cursor}</td>`;
        });
        html += '</tr>';
    }
    document.getElementById('rows').innerHTML = html;
</script>
</body>
</html>
